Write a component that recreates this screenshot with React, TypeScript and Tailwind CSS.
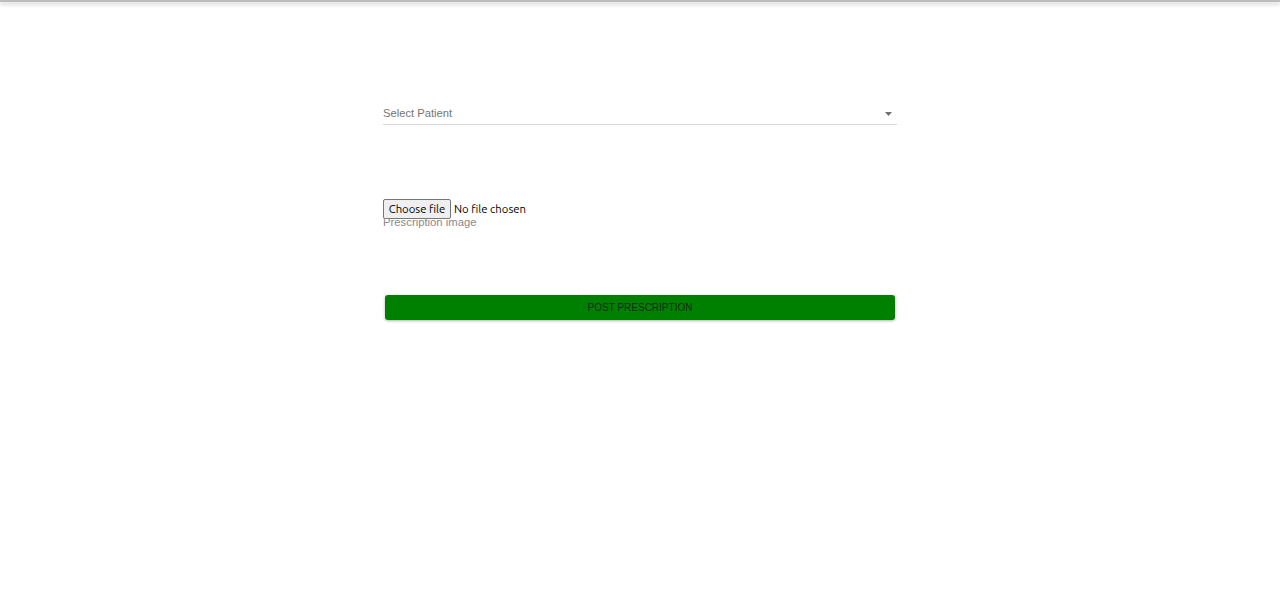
export default function App() {
  return (
    <div className="min-h-[608px] bg-white" style={{ fontFamily: "'Liberation Sans', Arial, sans-serif" }}>
      <div className="h-[2px] bg-[#bdbdbd] shadow-[0_2px_4px_rgba(0,0,0,0.25)]"></div>

      <div className="mx-auto w-[514px] pt-[100px]">
        {/* Select */}
        <div className="relative flex h-[23px] items-center border-b border-[#d9d9d9]">
          <span className="text-[11.2px] text-[#757575]">Select Patient</span>
          <svg className="absolute right-[5px] top-[10px]" width="7" height="4" viewBox="0 0 7 4">
            <path d="M0 0 L7 0 L3.5 4 Z" fill="#6f6f6f" />
          </svg>
        </div>

        {/* File input */}
        <div className="mt-[74px] flex flex-col">
          <label
            className="flex items-center text-[11.3px] text-black"
            style={{ fontFamily: "Ubuntu, 'DejaVu Sans', sans-serif" }}
          >
            <input type="file" className="hidden" />
            <span className="flex h-[20px] w-[68px] items-center justify-center rounded-[2px] border border-[#767676] bg-[#efefef]">
              Choose file
            </span>
            <span className="ml-[3px]">No file chosen</span>
          </label>
          <span className="-mt-[4px] text-[11.3px] leading-[14px] text-[#8a8a8a]">Prescription image</span>
        </div>

        {/* Submit */}
        <div className="mt-[66px] px-[2px]">
          <button className="flex h-[25px] w-full items-center justify-center rounded-[3px] bg-[#008000] text-[10px] text-[#1a2a1a] shadow-[0_1px_3px_rgba(0,0,0,0.3)]">
            POST PRESCRIPTION
          </button>
        </div>
      </div>
    </div>
  );
}
